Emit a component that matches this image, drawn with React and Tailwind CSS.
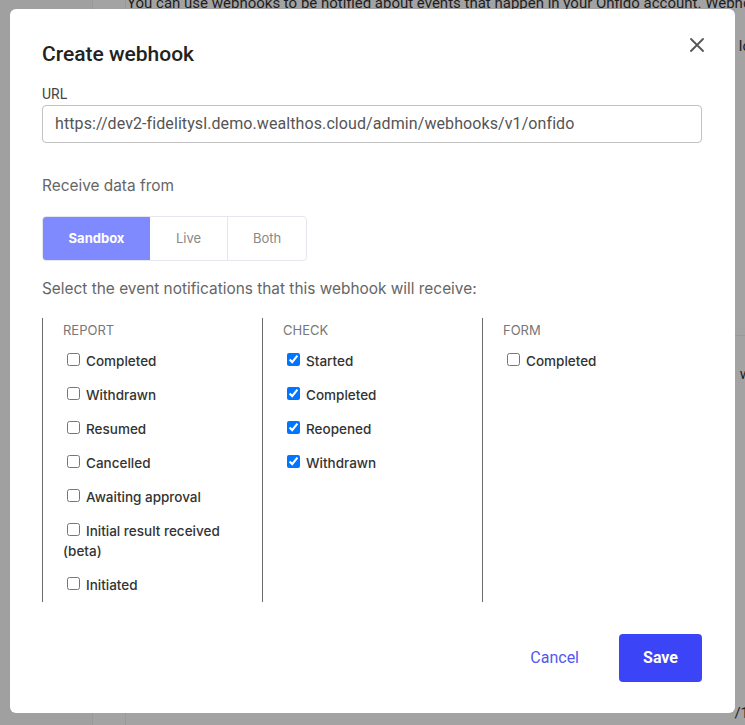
import React from 'react';

const report = ['Completed', 'Withdrawn', 'Resumed', 'Cancelled', 'Awaiting approval', 'Initial result received (beta)', 'Initiated'];
const check = ['Started', 'Completed', 'Reopened', 'Withdrawn'];
const form = ['Completed'];

const EventColumn = ({ title, items, checked }) => (
  <div className="border-l border-[#6b6b6b] pl-[20px] pr-[20px] pt-[2px]">
    <div className="text-[13px] leading-[20px] text-[#777] uppercase">{title}</div>
    <div className="mt-[11px] flex flex-col gap-[14px]">
      {items.map((item) => (
        <label key={item} className="block text-[13.5px] leading-[20px] font-medium text-[#333]">
          <input type="checkbox" defaultChecked={checked} className="mr-[6px] ml-[4px]" />
          {item}
        </label>
      ))}
    </div>
  </div>
);

export default function App() {
  return (
    <div className="relative w-[745px] h-[725px] overflow-hidden bg-[#a3a3a3] font-['Inter',sans-serif]">
      {/* page behind the overlay */}
      <div className="absolute inset-0 flex">
        <div className="w-[93px] h-full bg-[#a0a0a0] border-r border-[#999]" />
        <div className="w-[33px] h-full border-r border-[#999]" />
        <div className="flex-1 relative">
          <div className="absolute top-[-8px] left-[1px] whitespace-nowrap text-[15px] text-[#1e1e1e] font-['Roboto',sans-serif]">
            You can use webhooks to be notified about events that happen in your Onfido account. Webhook o
          </div>
          <div className="absolute top-[35px] right-[-6px] text-[15px] text-[#1e1e1e] font-['Roboto',sans-serif]">lo</div>
          <div className="absolute top-[335px] left-0 right-0 border-t border-[#999]" />
          <div className="absolute top-[363px] right-[-6px] text-[15px] text-[#1e1e1e] font-['Roboto',sans-serif]">w</div>
          <div className="absolute top-[702px] right-[-4px] text-[15px] text-[#1e1e1e] font-['Roboto',sans-serif]">/1</div>
        </div>
      </div>

      {/* modal */}
      <div className="absolute left-[10px] top-[9px] w-[725px] h-[704px] bg-white rounded-[6px] pl-[32px] pr-[33px] pt-[31px]">
        <button className="absolute top-[29px] right-[31px] w-[14px] h-[14px] text-[#555]">
          <svg viewBox="0 0 14 14" width="14" height="14" fill="none" stroke="currentColor" strokeWidth="1.8" strokeLinecap="round">
            <path d="M1 1L13 13M13 1L1 13" />
          </svg>
        </button>

        <h2 className="text-[21px] leading-[28px] font-medium text-[#222] font-['Roboto',sans-serif]">Create webhook</h2>

        <div className="mt-[16px] text-[14px] leading-[20px] text-[#444] font-['Roboto',sans-serif]">URL</div>
        <div className="mt-[1px] h-[38px] border border-[#c2c2c2] rounded-[4px] flex items-center px-[12px] text-[16px] tracking-[0.09px] text-[#555] font-['Roboto',sans-serif]">
          https://dev2-fidelitysl.demo.wealthos.cloud/admin/webhooks/v1/onfido
        </div>

        <div className="mt-[31px] text-[15.4px] leading-[24px] text-[#666]">Receive data from</div>

        <div className="mt-[18px] flex w-[265px] h-[45px] rounded-[4px] border border-[#e6e6ee] text-[13px] overflow-hidden">
          <div className="w-[107px] bg-[#7f8aff] text-white font-bold flex items-center justify-center">Sandbox</div>
          <div className="w-[78px] border-r border-[#e6e6ee] text-[#888] flex items-center justify-center">Live</div>
          <div className="flex-1 text-[#888] flex items-center justify-center">Both</div>
        </div>

        <div className="mt-[16px] text-[15.4px] leading-[24px] text-[#666]">
          Select the event notifications that this webhook will receive:
        </div>

        <div className="mt-[17px] grid grid-cols-[220px_220px_220px] h-[284px]">
          <EventColumn title="Report" items={report} checked={false} />
          <EventColumn title="Check" items={check} checked={true} />
          <EventColumn title="Form" items={form} checked={false} />
        </div>

        <div className="mt-[32px] flex justify-end items-center font-['Roboto',sans-serif] text-[16px]">
          <button className="mr-[40px] text-[#5157f2]">Cancel</button>
          <button className="w-[83px] h-[48px] rounded-[4px] bg-[#3b44f6] text-white font-bold">Save</button>
        </div>
      </div>
    </div>
  );
}
